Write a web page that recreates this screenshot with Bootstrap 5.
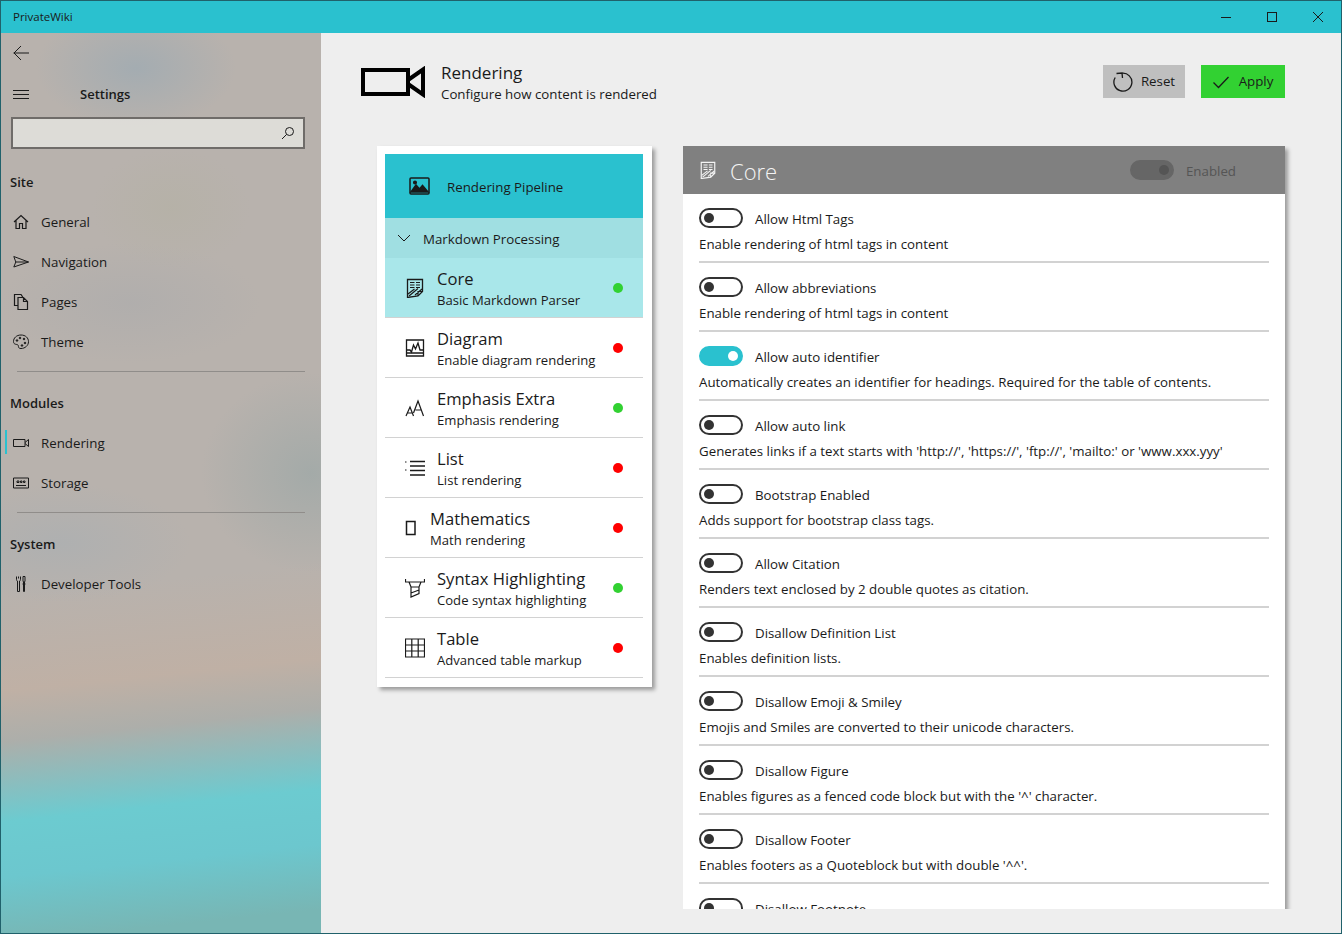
<!DOCTYPE html>
<html lang="en">
<head>
    <meta charset="UTF-8">
    <meta name="viewport" content="width=device-width, initial-scale=1.0">
    <title>PrivateWiki</title>
    <link href="https://cdn.jsdelivr.net/npm/bootstrap@5.3.0/dist/css/bootstrap.min.css" rel="stylesheet">
    <style>
        html, body { height: 100%; }
        body { font-family: "Open Sans", "Liberation Sans", sans-serif; font-size: 13.3px; color: #1a1a1a; background: #eee; overflow: hidden; }
        svg { display: block; flex: none; fill: none; stroke: currentColor; }

        .app-window { width: 1342px; height: 934px; border: 1px solid #20616b; }
        .title-bar { height: 32px; background: #2ac1cf; }
        .app-name { font-size: 11.5px; padding-left: 12px; }
        .win-btn { width: 46px; height: 32px; }

        .side-pane { width: 320px; flex: none;
            background:
                radial-gradient(ellipse 100px 60px at 135px 35px, rgba(150,168,180,.6), transparent),
                radial-gradient(ellipse 80px 60px at 170px 175px, rgba(176,176,155,.3), transparent),
                radial-gradient(ellipse 110px 100px at 310px 440px, rgba(150,165,165,.6), transparent),
                radial-gradient(ellipse 130px 60px at 60px 510px, rgba(165,174,180,.5), transparent),
                radial-gradient(ellipse 130px 60px at 130px 270px, rgba(165,168,172,.4), transparent),
                linear-gradient(174deg, transparent 0, transparent 560px, rgba(192,176,164,.9) 655px, rgba(172,174,170,.95) 705px, #6ccbd0 785px, #6cc7ce 840px, #78b6b4 905px),
                #b8b2ad; }
        .side-row { height: 40px; padding-left: 12px; }
        .side-burger { margin-top: 4px; }
        .side-title { margin: 4px 0 0 51px; font-weight: 600; font-size: 13px; }
        .search-box { height: 32px; margin: 4px 16px 13px 10px; background: rgba(235,235,232,.72); border: 2px solid #6f6c69; padding-right: 8px; }
        .side-head { height: 40px; padding: 2px 0 0 9px; font-weight: 600; font-size: 13px; }
        .side-item { height: 40px; padding-left: 12px; gap: 12px; position: relative; }
        .side-item svg { width: 16px; height: 16px; }
        .side-item span { margin-top: 2px; }
        .side-item.is-active::before { content: ""; position: absolute; left: 4px; top: 7px; width: 2px; height: 24px; background: #2ac1cf; }
        .side-rule { height: 1px; background: #908d8a; margin: 9px 16px 11px 16px; }

        .main-pane { background: #eee; min-width: 0; }
        .page-head { padding: 28px 56px 0 40px; height: 113px; }
        .page-icon { margin: 5px 16px 0 0; color: #000; }
        .page-title { font-size: 17px; line-height: 24px; }
        .page-sub { line-height: 20px; margin-top: -1px; }
        .act-btn { height: 33px; margin-top: 4px; font-size: 13.3px; border: 0; border-radius: 0; color: #1a1a1a; padding: 0; }
        .act-reset { width: 82px; background: #bfbfbf; margin-right: 16px; gap: 8px; }
        .act-apply { width: 84px; background: #32d132; gap: 10px; }

        .pipe-card { width: 275px; height: 541px; margin-left: 56px; padding: 8px 9px 9px 8px; background: #fff; box-shadow: 3px 3px 4px rgba(0,0,0,.35); flex: none; }
        .pipe-head { height: 64px; background: #2ac1cf; padding-left: 24px; gap: 17px; }
        .pipe-group { height: 40px; background: #a0dfe2; padding-left: 12px; gap: 12px; }
        .pipe-head span, .pipe-group span { margin-top: 4px; }
        .pipe-row { height: 60px; padding-left: 20px; padding-right: 20px; border-bottom: 1px solid #d2d2d2; }
        .pipe-row.is-current { background: #a9e7ea; }
        .pipe-icon { width: 20px; height: 20px; margin-right: 12px; }
        .pipe-icon-sm { margin-right: 5px; }
        .pipe-name { font-size: 16.6px; line-height: 22px; margin-top: 2px; }
        .pipe-desc { font-size: 13.1px; line-height: 18px; margin-top: 1px; }
        .state-dot { width: 10px; height: 10px; border-radius: 50%; flex: none; }
        .dot-on { background: #32d132; }
        .dot-off { background: #ff0000; }

        .opt-clip { margin-left: 31px; width: 610px; height: 763px; overflow: hidden; }
        .opt-card { width: 602px; background: #fff; box-shadow: 3px 3px 4px rgba(0,0,0,.35); }
        .opt-head { height: 48px; background: #808080; padding: 0 49px 0 16px; color: #f4f4f4; }
        .opt-head-title { font-size: 22px; font-weight: 300; margin: 2px 0 0 13px; }
        .opt-enabled { color: #555; margin: 4px 0 0 12px; }
        .opt-body { padding: 0 16px; }
        .opt-row { height: 69px; padding-top: 14px; border-bottom: 2px solid #d2d2d2; }
        .opt-top { height: 20px; gap: 12px; }
        .opt-top span { margin-top: 4px; }
        .opt-desc { line-height: 20px; margin-top: 6px; }

        .tgl { width: 44px; height: 20px; border: 2px solid #333; border-radius: 10px; position: relative; flex: none; }
        .tgl::after { content: ""; position: absolute; left: 3px; top: 3px; width: 10px; height: 10px; border-radius: 50%; background: #333; }
        .tgl.is-on { background: #2ac1cf; border-color: #2ac1cf; }
        .tgl.is-on::after { left: auto; right: 3px; background: #fff; }
        .tgl.is-off { background: #666; border-color: #666; }
        .tgl.is-off::after { left: auto; right: 3px; background: #555; }
    </style>
</head>
<body>
    <svg width="0" height="0" style="position:absolute">
        <symbol id="ic-core" viewBox="0 0 20 20">
            <path d="M2.500 1.500h15v12l-4.500 4.500-10.500 1.500z" stroke-width="1.300"/>
            <path d="M5 4.500h4.500M5 7h4.500M5 9.500h4.500M11 4.500h4M11 7h4M11 9.500h4M3 16l6.500-5M4 18l9-7.500M10 17l7-6M13 18v-4.500h4.500" stroke-width="1.200"/>
        </symbol>
    </svg>

    <div class="app-window d-flex flex-column">
        <div class="title-bar d-flex align-items-center flex-none">
            <div class="app-name flex-grow-1">PrivateWiki</div>
            <div class="win-btn d-flex align-items-center justify-content-center">
                <svg width="10" height="10" viewBox="0 0 10 10"><path d="M0 5.500h10"/></svg>
            </div>
            <div class="win-btn d-flex align-items-center justify-content-center">
                <svg width="10" height="10" viewBox="0 0 10 10"><rect x=".5" y=".5" width="9" height="9"/></svg>
            </div>
            <div class="win-btn d-flex align-items-center justify-content-center">
                <svg width="10" height="10" viewBox="0 0 10 10"><path d="M0 0l10 10M10 0L0 10"/></svg>
            </div>
        </div>

        <div class="d-flex flex-grow-1" style="min-height:0">
            <div class="side-pane">
                <div class="side-row d-flex align-items-center">
                    <svg width="16" height="16" viewBox="0 0 16 16" stroke="#333"><path d="M0.500 8h16M8 1L1 8l7 7"/></svg>
                </div>
                <div class="side-row d-flex align-items-center">
                    <svg class="side-burger" width="16" height="10" viewBox="0 0 16 10"><path d="M0 .5h16M0 4.500h16M0 8.500h16"/></svg>
                    <div class="side-title">Settings</div>
                </div>
                <div class="search-box d-flex align-items-center justify-content-end">
                    <svg width="14" height="14" viewBox="0 0 14 14"><circle cx="8.500" cy="5.500" r="4"/><path d="M5.500 8.500L1 13"/></svg>
                </div>

                <div class="side-head d-flex align-items-center">Site</div>
                <div class="side-item d-flex align-items-center">
                    <svg viewBox="0 0 16 16" stroke-width="1.200"><path d="M1 8l7-6.500L15 8M3 6.500V14.500h3.500V9.500h3v5H13V6.500"/></svg><span>General</span>
                </div>
                <div class="side-item d-flex align-items-center">
                    <svg viewBox="0 0 16 16"><path d="M.8 2.500L15.500 8 .8 13l2-5zM2.800 8h12.700"/></svg><span>Navigation</span>
                </div>
                <div class="side-item d-flex align-items-center">
                    <svg viewBox="0 0 16 16" stroke-width="1.200"><path d="M5 11.500H1.500V.5H8l2 3M5 3.500h5.500L14.500 7.500v8H5zM10.500 3.500v4h4"/></svg><span>Pages</span>
                </div>
                <div class="side-item d-flex align-items-center">
                    <svg viewBox="0 0 16 16"><path d="M8 1C3.500 1 .5 4 .5 7.500S4 10 5 11s-.5 3.500 3 3.500c4 0 7.500-3 7.500-6.800S12.500 1 8 1z"/><circle cx="4" cy="6.500" r=".8" fill="currentColor"/><circle cx="7" cy="4" r=".8" fill="currentColor"/><circle cx="11" cy="5" r=".8" fill="currentColor"/><circle cx="12" cy="9" r=".8" fill="currentColor"/><circle cx="9" cy="11.500" r=".8" fill="currentColor"/></svg><span>Theme</span>
                </div>
                <div class="side-rule"></div>

                <div class="side-head d-flex align-items-center">Modules</div>
                <div class="side-item is-active d-flex align-items-center">
                    <svg viewBox="0 0 16 16"><path d="M.5 4.500h11.500v7H.5zM12 7.500l3.500-3v7L12 8.500"/></svg><span>Rendering</span>
                </div>
                <div class="side-item d-flex align-items-center">
                    <svg viewBox="0 0 16 16"><path d="M.5 3h15v10H.5zM3 10.500h10M4 6h2v1.500H4zM7.500 6h1.500v1.500H7.500zM10.500 6H12v1.500h-1.500z"/></svg><span>Storage</span>
                </div>
                <div class="side-rule"></div>

                <div class="side-head d-flex align-items-center">System</div>
                <div class="side-item d-flex align-items-center">
                    <svg viewBox="0 0 16 16"><path d="M3.500.5v3c0 1 .5 1.500 1 1.500v10.500h2V5c.5 0 1-.5 1-1.500v-3M5.500.5v2M10 .5h2v5h-.5v10h-1v-10H10zM9.500 8h3"/></svg><span>Developer Tools</span>
                </div>
            </div>

            <div class="main-pane flex-grow-1 d-flex flex-column">
                <div class="page-head d-flex align-items-start">
                    <svg class="page-icon" width="64" height="32" viewBox="0 0 64 32" stroke-width="4"><path d="M2 4h45v24H2zM47 14L62 3.500v25L47 18"/></svg>
                    <div class="flex-grow-1">
                        <div class="page-title">Rendering</div>
                        <div class="page-sub">Configure how content is rendered</div>
                    </div>
                    <button class="btn act-btn act-reset d-flex align-items-center justify-content-center">
                        <svg width="20" height="20" viewBox="0 0 20 20" stroke-width="1.300"><path d="M9 1.200A9 9 0 1 1 2.200 5.500M3.500 1.500L9 1l.5 5"/></svg>Reset
                    </button>
                    <button class="btn act-btn act-apply d-flex align-items-center justify-content-center">
                        <svg width="16" height="16" viewBox="0 0 16 16" stroke-width="1.300"><path d="M.5 8.500l5 5L15.500 3"/></svg>Apply
                    </button>
                </div>

                <div class="d-flex align-items-start">
                    <div class="pipe-card">
                        <div class="pipe-head d-flex align-items-center">
                            <svg width="21" height="18" viewBox="0 0 21 18" stroke-width="1.500"><rect x="1" y="1" width="19" height="16" rx="1"/><path d="M2 15l5-7 3.500 4 3-3.500L19 15z" fill="currentColor"/><circle cx="6" cy="5.500" r="1.300" fill="currentColor"/></svg>
                            <span>Rendering Pipeline</span>
                        </div>
                        <div class="pipe-group d-flex align-items-center">
                            <svg width="14" height="8" viewBox="0 0 14 8"><path d="M1 1l6 6 6-6"/></svg>
                            <span>Markdown Processing</span>
                        </div>

                        <div class="pipe-row is-current d-flex align-items-center">
                            <svg class="pipe-icon"><use href="#ic-core"/></svg>
                            <div class="flex-grow-1"><div class="pipe-name">Core</div><div class="pipe-desc">Basic Markdown Parser</div></div>
                            <div class="state-dot dot-on"></div>
                        </div>
                        <div class="pipe-row d-flex align-items-center">
                            <svg class="pipe-icon" viewBox="0 0 20 20" stroke-width="1.300"><path d="M1.500 2h17v16h-17zM1.500 15h17"/><path d="M2 12h3l1.500 2 2-7 2 4 2.500-6 2 7h3"/></svg>
                            <div class="flex-grow-1"><div class="pipe-name">Diagram</div><div class="pipe-desc">Enable diagram rendering</div></div>
                            <div class="state-dot dot-off"></div>
                        </div>
                        <div class="pipe-row d-flex align-items-center">
                            <svg class="pipe-icon" viewBox="0 0 20 20" stroke-width="1.200"><path d="M1 18L5 9l3.500 9M2.500 15h5M8.500 15L13 3l5.500 15M10.500 12h6"/></svg>
                            <div class="flex-grow-1"><div class="pipe-name">Emphasis Extra</div><div class="pipe-desc">Emphasis rendering</div></div>
                            <div class="state-dot dot-on"></div>
                        </div>
                        <div class="pipe-row d-flex align-items-center">
                            <svg class="pipe-icon" viewBox="0 0 20 20"><path d="M5 3.500h15M5 8h15M5 12.500h15M5 17h15" stroke-width="1.300"/><path d="M0 4h1.500M0 12h1.500"/></svg>
                            <div class="flex-grow-1"><div class="pipe-name">List</div><div class="pipe-desc">List rendering</div></div>
                            <div class="state-dot dot-off"></div>
                        </div>
                        <div class="pipe-row d-flex align-items-center">
                            <svg class="pipe-icon pipe-icon-sm" viewBox="0 0 20 20" stroke-width="1.500"><path d="M1.500 3.500h8.500v13H1.500z"/></svg>
                            <div class="flex-grow-1"><div class="pipe-name">Mathematics</div><div class="pipe-desc">Math rendering</div></div>
                            <div class="state-dot dot-off"></div>
                        </div>
                        <div class="pipe-row d-flex align-items-center">
                            <svg class="pipe-icon" viewBox="0 0 20 20" stroke-width="1.200"><path d="M.5 1v3h19V1M4 4l2 5h8l2-5M6 9v10l8-3.500V9M6 15l8-3"/></svg>
                            <div class="flex-grow-1"><div class="pipe-name">Syntax Highlighting</div><div class="pipe-desc">Code syntax highlighting</div></div>
                            <div class="state-dot dot-on"></div>
                        </div>
                        <div class="pipe-row d-flex align-items-center">
                            <svg class="pipe-icon" viewBox="0 0 20 20" stroke-width="1.200"><path d="M.5 1h19v18H.5zM.5 7h19M.5 13h19M6.800 1v18M13.200 1v18"/></svg>
                            <div class="flex-grow-1"><div class="pipe-name">Table</div><div class="pipe-desc">Advanced table markup</div></div>
                            <div class="state-dot dot-off"></div>
                        </div>
                    </div>

                    <div class="opt-clip">
                        <div class="opt-card">
                            <div class="opt-head d-flex align-items-center">
                                <svg width="18" height="20" viewBox="0 0 20 20"><use href="#ic-core"/></svg>
                                <div class="opt-head-title flex-grow-1">Core</div>
                                <div class="tgl is-off"></div>
                                <div class="opt-enabled">Enabled</div>
                            </div>
                            <div class="opt-body">
                                <div class="opt-row">
                                    <div class="opt-top d-flex align-items-center"><div class="tgl"></div><span>Allow Html Tags</span></div>
                                    <div class="opt-desc">Enable rendering of html tags in content</div>
                                </div>
                                <div class="opt-row">
                                    <div class="opt-top d-flex align-items-center"><div class="tgl"></div><span>Allow abbreviations</span></div>
                                    <div class="opt-desc">Enable rendering of html tags in content</div>
                                </div>
                                <div class="opt-row">
                                    <div class="opt-top d-flex align-items-center"><div class="tgl is-on"></div><span>Allow auto identifier</span></div>
                                    <div class="opt-desc">Automatically creates an identifier for headings. Required for the table of contents.</div>
                                </div>
                                <div class="opt-row">
                                    <div class="opt-top d-flex align-items-center"><div class="tgl"></div><span>Allow auto link</span></div>
                                    <div class="opt-desc">Generates links if a text starts with 'http://', 'https://', 'ftp://', 'mailto:' or 'www.xxx.yyy'</div>
                                </div>
                                <div class="opt-row">
                                    <div class="opt-top d-flex align-items-center"><div class="tgl"></div><span>Bootstrap Enabled</span></div>
                                    <div class="opt-desc">Adds support for bootstrap class tags.</div>
                                </div>
                                <div class="opt-row">
                                    <div class="opt-top d-flex align-items-center"><div class="tgl"></div><span>Allow Citation</span></div>
                                    <div class="opt-desc">Renders text enclosed by 2 double quotes as citation.</div>
                                </div>
                                <div class="opt-row">
                                    <div class="opt-top d-flex align-items-center"><div class="tgl"></div><span>Disallow Definition List</span></div>
                                    <div class="opt-desc">Enables definition lists.</div>
                                </div>
                                <div class="opt-row">
                                    <div class="opt-top d-flex align-items-center"><div class="tgl"></div><span>Disallow Emoji &amp; Smiley</span></div>
                                    <div class="opt-desc">Emojis and Smiles are converted to their unicode characters.</div>
                                </div>
                                <div class="opt-row">
                                    <div class="opt-top d-flex align-items-center"><div class="tgl"></div><span>Disallow Figure</span></div>
                                    <div class="opt-desc">Enables figures as a fenced code block but with the '^' character.</div>
                                </div>
                                <div class="opt-row">
                                    <div class="opt-top d-flex align-items-center"><div class="tgl"></div><span>Disallow Footer</span></div>
                                    <div class="opt-desc">Enables footers as a Quoteblock but with double '^^'.</div>
                                </div>
                                <div class="opt-row">
                                    <div class="opt-top d-flex align-items-center"><div class="tgl"></div><span>Disallow Footnote</span></div>
                                </div>
                            </div>
                        </div>
                    </div>
                </div>
            </div>
        </div>
    </div>
    <script src="https://cdn.jsdelivr.net/npm/bootstrap@5.3.0/dist/js/bootstrap.bundle.min.js"></script>
</body>
</html>
